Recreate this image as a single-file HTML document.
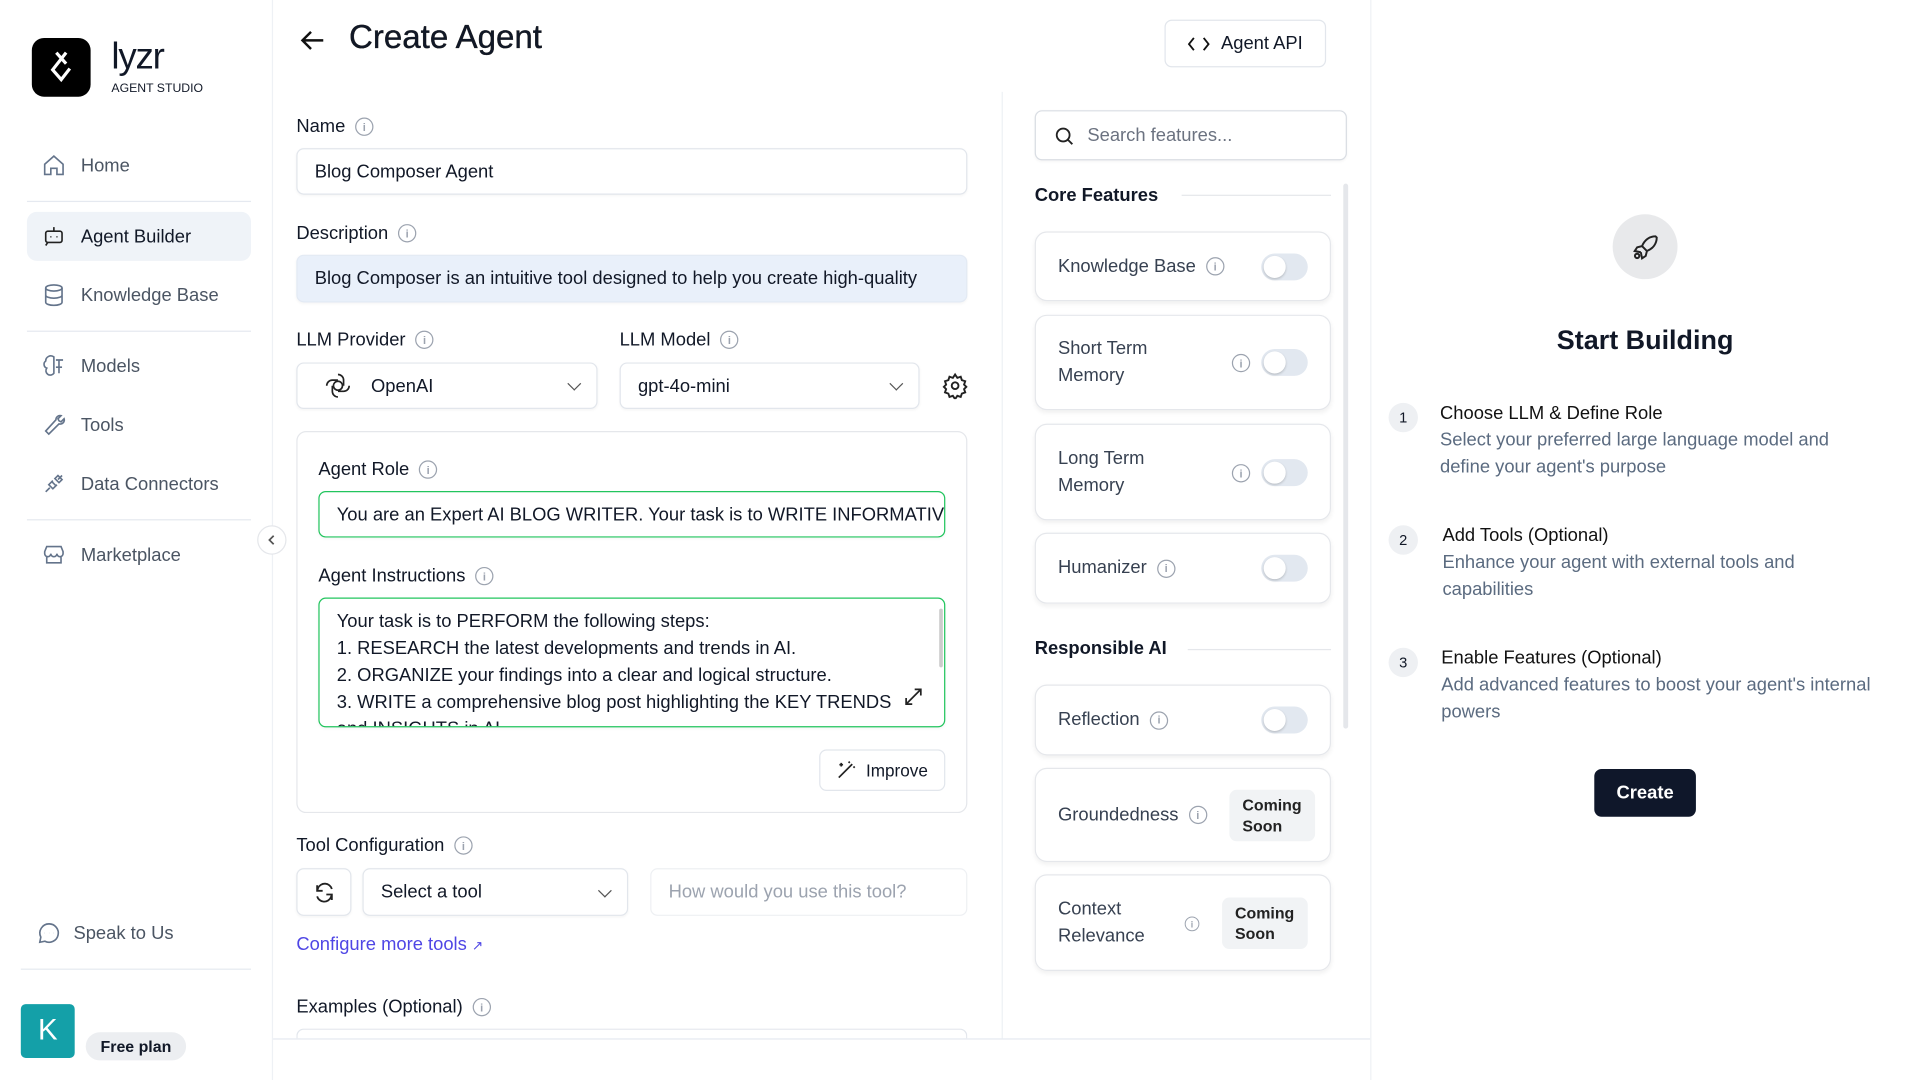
<!DOCTYPE html>
<html><head><meta charset="utf-8"><style>
*{box-sizing:border-box;margin:0;padding:0}
html,body{width:1920px;height:1080px;overflow:hidden;background:#fff}
#w{position:absolute;left:0;top:0;width:1568px;height:882px;transform:scale(1.22449);transform-origin:0 0;font-family:"Liberation Sans",sans-serif;color:#111827;font-size:15px}
.a{position:absolute}
.nav{position:absolute;left:22px;width:183px;height:40px;display:flex;align-items:center;padding-left:12px;gap:12px;color:#4b5563;font-size:15px;border-radius:8px}
.nav svg{width:20px;height:20px;stroke:#64748b;fill:none;stroke-width:1.6}
.sep{position:absolute;left:22px;width:183px;height:1px;background:#e5e9f0}
.lbl{position:absolute;font-size:15px;color:#111827;display:flex;align-items:center;gap:8px}
.i{width:15px;height:15px;border:1.3px solid #9ca3af;border-radius:50%;font-size:9px;color:#9ca3af;display:inline-flex;align-items:center;justify-content:center;font-weight:bold}
.inp{position:absolute;border:1px solid #e2e6ec;border-radius:6px;background:#fff;display:flex;align-items:center;padding-left:14px;font-size:15px;white-space:nowrap;overflow:hidden;box-shadow:0 1px 2px rgba(0,0,0,.04)}
.chev{position:absolute;right:14px;top:50%;width:8px;height:8px;border-right:1.4px solid #555;border-bottom:1.4px solid #555;transform:translateY(-70%) rotate(45deg)}
.card{position:absolute;left:845px;width:242px;border:1px solid #e5e7eb;border-radius:10px;box-shadow:0 2px 4px rgba(0,0,0,.06);display:flex;align-items:center;padding-left:18px;font-size:15px;color:#374151;line-height:22px}
.tg{position:absolute;right:18px;top:50%;transform:translateY(-50%);width:38px;height:22px;border-radius:11px;background:#e2e8f0}
.tg:after{content:"";position:absolute;left:2px;top:2px;width:18px;height:18px;border-radius:50%;background:#fff;box-shadow:0 1px 2px rgba(0,0,0,.2)}
.cs{position:absolute;right:12px;top:50%;transform:translateY(-50%);background:#f1f3f5;border-radius:6px;font-size:13px;font-weight:bold;padding:4px 11px;line-height:17px;color:#222}
.num{position:absolute;left:1134px;width:24px;height:24px;border-radius:50%;background:#eef0f3;font-size:12px;display:flex;align-items:center;justify-content:center}
.st{position:absolute;left:1176px;font-size:15px;line-height:22px}
.st b{font-weight:normal;color:#111}
.st span{color:#5b6b80}
</style></head><body><div id="w">
<div class="a" style="left:222px;top:0;width:1px;height:882px;background:#eef1f5"></div>
<div class="a" style="left:26px;top:31px;width:48px;height:48px;background:#000;border-radius:10px;color:#fff;font-size:26px;display:flex;align-items:center;justify-content:center">
<svg width="26" height="30" viewBox="0 0 26 30" fill="none" stroke="#fff" stroke-width="2.6"><path d="M9 3l8 9M17 3L6 17l7 8 7-9"/></svg></div>
<div class="a" style="left:91px;top:30px;font-size:30px;letter-spacing:-1px">lyzr</div>
<div class="a" style="left:91px;top:67px;font-size:10px">AGENT STUDIO</div>
<div class="nav" style="top:115px"><svg viewBox="0 0 24 24"><path d="M3 11l9-8 9 8v10H15v-6H9v6H3z"/></svg>Home</div>
<div class="sep" style="top:164px"></div>
<div class="nav" style="top:173px;background:#eff3f8;color:#111827"><svg viewBox="0 0 24 24" style="stroke:#222"><rect x="4" y="7" width="16" height="11" rx="2"/><path d="M12 3v4M9 12v1M15 12v1M6 18l-2 3"/></svg>Agent Builder</div>
<div class="nav" style="top:221px"><svg viewBox="0 0 24 24"><ellipse cx="12" cy="5" rx="8" ry="3"/><path d="M4 5v14c0 1.7 3.6 3 8 3s8-1.3 8-3V5M4 12c0 1.7 3.6 3 8 3s8-1.3 8-3"/></svg>Knowledge Base</div>
<div class="sep" style="top:270px"></div>
<div class="nav" style="top:279px"><svg viewBox="0 0 24 24"><path d="M12 3a5 5 0 0 0-8 4 4 4 0 0 0 1 7 4 4 0 0 0 7 5zM14 6h7M17 6v13M14 13h6"/></svg>Models</div>
<div class="nav" style="top:327px"><svg viewBox="0 0 24 24"><path d="M14 7a4 4 0 0 1 5-4l-3 3 1 2 2 1 3-3a4 4 0 0 1-5 5L7 21l-3-3z"/></svg>Tools</div>
<div class="nav" style="top:375px"><svg viewBox="0 0 24 24"><path d="M4 20l4-4M20 4l-4 4M7 13l4 4 3-3-4-4zM13 7l4 4 3-3-4-4zM9 11l2-2M13 15l2-2"/></svg>Data Connectors</div>
<div class="sep" style="top:424px"></div>
<div class="nav" style="top:433px"><svg viewBox="0 0 24 24"><path d="M3 9l2-5h14l2 5v2a3 3 0 0 1-6 0 3 3 0 0 1-6 0 3 3 0 0 1-6 0zM5 13v7h14v-7"/></svg>Marketplace</div>
<div class="a" style="left:210px;top:429px;width:24px;height:24px;border-radius:50%;border:1px solid #e5e7eb;background:#fff;display:flex;align-items:center;justify-content:center"><svg width="10" height="10" viewBox="0 0 10 10"><path d="M6.5 1.5L3 5l3.5 3.5" stroke="#555" fill="none" stroke-width="1.4"/></svg></div>
<div class="nav" style="top:742px;left:18px;gap:10px"><svg viewBox="0 0 24 24"><path d="M12 3a9 9 0 0 0-8 13l-1 5 5-1a9 9 0 1 0 4-17z"/><path d="M8 12h.1M12 12h.1M16 12h.1"/></svg>Speak to Us</div>
<div class="a" style="left:17px;top:791px;width:188px;height:1px;background:#e5e9f0"></div>
<div class="a" style="left:17px;top:820px;width:44px;height:44px;background:#14a0a8;border-radius:4px;color:#fff;font-size:24px;display:flex;align-items:center;justify-content:center">K</div>
<div class="a" style="left:70px;top:843px;width:82px;height:23px;background:#eceef1;border-radius:12px;font-size:13px;font-weight:bold;display:flex;align-items:center;justify-content:center">Free plan</div>
<svg class="a" style="left:244px;top:23px" width="22" height="20" viewBox="0 0 22 20"><path d="M20 10H3M10 3L3 10l7 7" stroke="#111" stroke-width="2" fill="none"/></svg>
<div class="a" style="left:285px;top:15px;font-size:27px;-webkit-text-stroke:0.3px #111">Create Agent</div>
<div class="a" style="left:951px;top:16px;width:132px;height:39px;border:1px solid #e2e6ec;border-radius:6px;display:flex;align-items:center;justify-content:center;gap:9px;font-size:15px"><svg width="18" height="12" viewBox="0 0 18 12"><path d="M5 1L1 6l4 5M13 1l4 5-4 5" stroke="#111" stroke-width="1.5" fill="none"/></svg>Agent API</div>
<div class="a" style="left:818px;top:75px;width:1px;height:773px;background:#eef1f5"></div>
<div class="a" style="left:223px;top:848px;width:896px;height:1px;background:#e5e9f0"></div>
<div class="a" style="left:1119px;top:0;width:1px;height:882px;background:#eef1f5"></div>
<div class="lbl" style="left:242px;top:95px">Name <span class="i">i</span></div>
<div class="inp" style="left:242px;top:121px;width:548px;height:38px">Blog Composer Agent</div>
<div class="lbl" style="left:242px;top:182px">Description <span class="i">i</span></div>
<div class="inp" style="left:242px;top:208px;width:548px;height:39px;background:#e9f0fa;border-color:#e3eaf4">Blog Composer is an intuitive tool designed to help you create high-quality</div>
<div class="lbl" style="left:242px;top:269px">LLM Provider <span class="i">i</span></div>
<div class="lbl" style="left:506px;top:269px">LLM Model <span class="i">i</span></div>
<div class="inp" style="left:242px;top:296px;width:246px;height:38px;padding-left:22px;gap:16px"><svg width="22" height="22" viewBox="0 0 24 24" fill="none" stroke="#222" stroke-width="1.5"><circle cx="12" cy="12" r="4"/><path d="M12 2a5 5 0 0 1 5 5v5M22 12a5 5 0 0 1-5 5h-5M12 22a5 5 0 0 1-5-5v-5M2 12a5 5 0 0 1 5-5h5"/></svg>OpenAI<div class="chev"></div></div>
<div class="inp" style="left:506px;top:296px;width:245px;height:38px">gpt-4o-mini<div class="chev"></div></div>
<svg class="a" style="left:769px;top:304px" width="22" height="22" viewBox="0 0 24 24" fill="none" stroke="#222" stroke-width="1.7"><circle cx="12" cy="12" r="3"/><path d="M12 2l2 3 3-1 1 3 3 1-1 3 2 2-2 2 1 3-3 1-1 3-3-1-2 3-2-3-3 1-1-3-3-1 1-3-2-2 2-2-1-3 3-1 1-3 3 1z"/></svg>
<div class="a" style="left:242px;top:352px;width:548px;height:312px;border:1px solid #e5e7eb;border-radius:8px"></div>
<div class="lbl" style="left:260px;top:375px">Agent Role <span class="i">i</span></div>
<div class="inp" style="left:260px;top:401px;width:512px;height:38px;border:1.5px solid #22c55e">You are an Expert AI BLOG WRITER. Your task is to WRITE INFORMATIVE</div>
<div class="lbl" style="left:260px;top:462px">Agent Instructions <span class="i">i</span></div>
<div class="inp" style="left:260px;top:488px;width:512px;height:106px;border:1.5px solid #22c55e;align-items:flex-start;padding-top:8px;padding-right:30px;line-height:22px;white-space:normal;font-size:15px">Your task is to PERFORM the following steps:<br>1. RESEARCH the latest developments and trends in AI.<br>2. ORGANIZE your findings into a clear and logical structure.<br>3. WRITE a comprehensive blog post highlighting the KEY TRENDS and INSIGHTS in AI.</div>
<div class="a" style="left:767px;top:497px;width:3px;height:48px;background:#ccc;border-radius:2px"></div>
<svg class="a" style="left:738px;top:561px" width="16" height="16" viewBox="0 0 16 16" fill="none" stroke="#222" stroke-width="1.4"><path d="M2 14l12-12M9 2h5v5M2 9v5h5"/></svg>
<div class="a" style="left:669px;top:612px;width:103px;height:34px;border:1px solid #e2e6ec;border-radius:6px;display:flex;align-items:center;justify-content:center;gap:8px;font-size:14px"><svg width="16" height="16" viewBox="0 0 16 16" fill="none" stroke="#222" stroke-width="1.4"><path d="M2 14L13 3M10 2l1-1M14 6l1-1M4 2v3M2.5 3.5h3"/></svg>Improve</div>
<div class="lbl" style="left:242px;top:682px">Tool Configuration <span class="i">i</span></div>
<div class="inp" style="left:242px;top:709px;width:45px;height:39px;padding:0;justify-content:center"><svg width="18" height="18" viewBox="0 0 24 24" fill="none" stroke="#222" stroke-width="2"><path d="M20 8A8 8 0 0 0 5 7L4 10M4 16a8 8 0 0 0 15 1l1-3M4 4v6h6M20 20v-6h-6"/></svg></div>
<div class="inp" style="left:296px;top:709px;width:217px;height:39px">Select a tool<div class="chev"></div></div>
<div class="inp" style="left:531px;top:709px;width:259px;height:39px;color:#9ca3af;border-color:#eef0f3;box-shadow:none">How would you use this tool?</div>
<div class="a" style="left:242px;top:763px;color:#4f46e5;font-size:15px">Configure more tools <span style="font-size:11px">↗</span></div>
<div class="lbl" style="left:242px;top:814px">Examples (Optional) <span class="i">i</span></div>
<div class="a" style="left:242px;top:840px;width:548px;height:8px;border:1px solid #e2e6ec;border-bottom:none;border-radius:6px 6px 0 0"></div>
<div class="inp" style="left:845px;top:90px;width:255px;height:41px;color:#6b7280;gap:10px;border-color:#d9dde3"><svg width="18" height="18" viewBox="0 0 24 24" fill="none" stroke="#222" stroke-width="2"><circle cx="11" cy="11" r="7"/><path d="M16 16l5 5"/></svg>Search features...</div>
<div class="a" style="left:845px;top:151px;font-size:15px;font-weight:bold">Core Features</div>
<div class="a" style="left:965px;top:159px;width:122px;height:1px;background:#e5e7eb"></div>
<div class="a" style="left:1097px;top:150px;width:4px;height:445px;background:#e5e7eb;border-radius:2px"></div>
<div class="card" style="top:189px;height:57px">Knowledge Base&nbsp;&nbsp;<span class="i">i</span><div class="tg"></div></div>
<div class="card" style="top:257px;height:78px">Short Term<br>Memory<span class="i" style="position:absolute;left:160px;top:31px">i</span><div class="tg"></div></div>
<div class="card" style="top:346px;height:79px">Long Term<br>Memory<span class="i" style="position:absolute;left:160px;top:32px">i</span><div class="tg"></div></div>
<div class="card" style="top:435px;height:58px">Humanizer&nbsp;&nbsp;<span class="i">i</span><div class="tg"></div></div>
<div class="a" style="left:845px;top:521px;font-size:15px;font-weight:bold">Responsible AI</div>
<div class="a" style="left:970px;top:530px;width:117px;height:1px;background:#e5e7eb"></div>
<div class="card" style="top:559px;height:58px">Reflection&nbsp;&nbsp;<span class="i">i</span><div class="tg"></div></div>
<div class="card" style="top:627px;height:77px">Groundedness&nbsp;&nbsp;<span class="i">i</span><div class="cs">Coming<br>Soon</div></div>
<div class="card" style="top:714px;height:79px">Context<br>Relevance<span class="i" style="position:absolute;left:120px;top:32px;transform:scale(.8)">i</span><div class="cs" style="right:18px">Coming<br>Soon</div></div>
<div class="a" style="left:1317px;top:175px;width:53px;height:53px;border-radius:50%;background:#e8e9eb;display:flex;align-items:center;justify-content:center"><svg width="24" height="24" viewBox="0 0 24 24" fill="none" stroke="#222" stroke-width="1.6"><path d="M20 3c-5 0-9 3-11 8l4 4c5-2 8-6 8-11zM9 11l-4 1-2 3 5 1M13 15l-1 4-3 2-1-5"/><circle cx="5" cy="19" r="1.8"/></svg></div>
<div class="a" style="left:1119px;width:449px;top:265px;text-align:center;font-size:22px;font-weight:bold">Start Building</div>
<div class="num" style="top:329px">1</div>
<div class="st" style="top:327px"><b>Choose LLM &amp; Define Role</b><br><span>Select your preferred large language model and<br>define your agent's purpose</span></div>
<div class="num" style="top:429px">2</div>
<div class="st" style="top:427px;left:1178px"><b>Add Tools (Optional)</b><br><span>Enhance your agent with external tools and<br>capabilities</span></div>
<div class="num" style="top:529px">3</div>
<div class="st" style="top:527px;left:1177px"><b>Enable Features (Optional)</b><br><span>Add advanced features to boost your agent's internal<br>powers</span></div>
<div class="a" style="left:1302px;top:628px;width:83px;height:39px;background:#0f172a;border-radius:6px;color:#fff;font-size:15px;font-weight:bold;display:flex;align-items:center;justify-content:center">Create</div>
</div></body></html>
